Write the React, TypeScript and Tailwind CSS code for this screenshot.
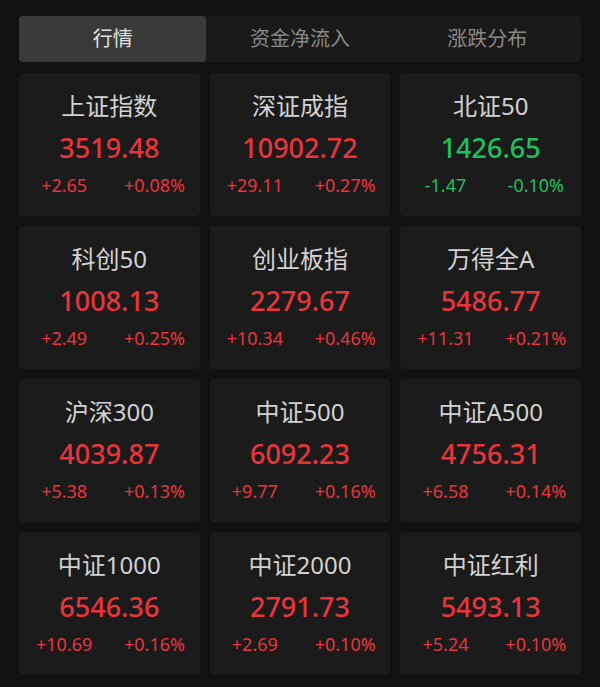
const tabs = ["行情", "资金净流入", "涨跌分布"];

type Index = { name: string; value: string; chg: string; pct: string; up: boolean };

const indices: Index[] = [
  { name: "上证指数", value: "3519.48", chg: "+2.65", pct: "+0.08%", up: true },
  { name: "深证成指", value: "10902.72", chg: "+29.11", pct: "+0.27%", up: true },
  { name: "北证50", value: "1426.65", chg: "-1.47", pct: "-0.10%", up: false },
  { name: "科创50", value: "1008.13", chg: "+2.49", pct: "+0.25%", up: true },
  { name: "创业板指", value: "2279.67", chg: "+10.34", pct: "+0.46%", up: true },
  { name: "万得全A", value: "5486.77", chg: "+11.31", pct: "+0.21%", up: true },
  { name: "沪深300", value: "4039.87", chg: "+5.38", pct: "+0.13%", up: true },
  { name: "中证500", value: "6092.23", chg: "+9.77", pct: "+0.16%", up: true },
  { name: "中证A500", value: "4756.31", chg: "+6.58", pct: "+0.14%", up: true },
  { name: "中证1000", value: "6546.36", chg: "+10.69", pct: "+0.16%", up: true },
  { name: "中证2000", value: "2791.73", chg: "+2.69", pct: "+0.10%", up: true },
  { name: "中证红利", value: "5493.13", chg: "+5.24", pct: "+0.10%", up: true },
];

export default function App() {
  return (
    <div
      className="w-[600px] h-[687px] bg-[#111111] px-[19px] pt-[16px] overflow-hidden"
      style={{ fontFamily: '"Noto Sans", "Noto Sans CJK SC", sans-serif' }}
    >
      <div className="flex h-[46px] rounded-[4px] bg-[#1a1a1a]">
        {tabs.map((t, i) => (
          <div
            key={t}
            className={
              i === 0
                ? "flex-1 flex items-center justify-center rounded-[4px] bg-[#3a3a3a] text-[#e2e2e2] text-[20px]"
                : "flex-1 flex items-center justify-center text-[#8a8a8a] text-[20px]"
            }
          >
            {t}
          </div>
        ))}
      </div>

      <div className="grid grid-cols-3 gap-x-[10px] gap-y-[10px] mt-[11px]">
        {indices.map(ix => (
          <div key={ix.name} className="h-[143px] rounded-[4px] bg-[#1b1b1b] flex flex-col items-center pt-[16px]">
            <div className="text-[24px] leading-[34px] text-[#d2d2d2]">{ix.name}</div>
            <div
              className={`text-[27px] leading-[36px] font-medium mt-[7px] ${ix.up ? "text-[#e8353c]" : "text-[#1fbf5b]"}`}
            >
              {ix.value}
            </div>
            <div
              className={`grid grid-cols-2 w-full text-[18px] leading-[26px] mt-[6px] ${ix.up ? "text-[#e8353c]" : "text-[#1fbf5b]"}`}
            >
              <div className="text-center">{ix.chg}</div>
              <div className="text-center">{ix.pct}</div>
            </div>
          </div>
        ))}
      </div>
    </div>
  );
}
